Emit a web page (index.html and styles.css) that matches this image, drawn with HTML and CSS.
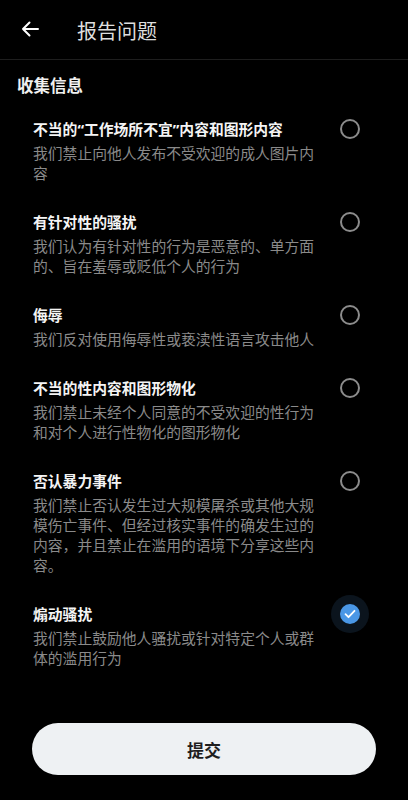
FILE: index.html
```html
<!DOCTYPE html>
<html lang="zh-CN">
<head>
  <meta charset="UTF-8" />
  <meta name="viewport" content="width=device-width, initial-scale=1.0" />
  <title>报告问题</title>
  <link rel="stylesheet" href="styles.css">
</head>
<body>
  <div class="page">
    <div class="topbar">
      <button class="back" aria-label="返回">
        <svg width="18" height="16" viewBox="0 0 18 16">
          <path d="M17 8H2M8.5 1.5L2 8l6.5 6.5" fill="none" stroke="#fff" stroke-width="2" stroke-linecap="round" stroke-linejoin="round"/>
        </svg>
      </button>
      <div class="title">报告问题</div>
    </div>

    <h2 class="section">收集信息</h2>

    <ul class="options">
      <li class="option">
        <div class="text">
          <div class="name">不当的“工作场所不宜”内容和图形内容</div>
          <div class="desc">我们禁止向他人发布不受欢迎的成人图片内容</div>
        </div>
        <span class="radio"></span>
      </li>
      <li class="option">
        <div class="text">
          <div class="name">有针对性的骚扰</div>
          <div class="desc">我们认为有针对性的行为是恶意的、单方面的、旨在羞辱或贬低个人的行为</div>
        </div>
        <span class="radio"></span>
      </li>
      <li class="option">
        <div class="text">
          <div class="name">侮辱</div>
          <div class="desc">我们反对使用侮辱性或亵渎性语言攻击他人</div>
        </div>
        <span class="radio"></span>
      </li>
      <li class="option">
        <div class="text">
          <div class="name">不当的性内容和图形物化</div>
          <div class="desc">我们禁止未经个人同意的不受欢迎的性行为和对个人进行性物化的图形物化</div>
        </div>
        <span class="radio"></span>
      </li>
      <li class="option">
        <div class="text">
          <div class="name">否认暴力事件</div>
          <div class="desc">我们禁止否认发生过大规模屠杀或其他大规模伤亡事件、但经过核实事件的确发生过的内容，并且禁止在滥用的语境下分享这些内容。</div>
        </div>
        <span class="radio"></span>
      </li>
      <li class="option">
        <div class="text">
          <div class="name">煽动骚扰</div>
          <div class="desc">我们禁止鼓励他人骚扰或针对特定个人或群体的滥用行为</div>
        </div>
        <span class="radio checked">
          <svg width="12" height="10" viewBox="0 0 12 10">
            <path d="M1.5 5.2L4.5 8.2 10.5 1.8" fill="none" stroke="#fff" stroke-width="1.8" stroke-linecap="round" stroke-linejoin="round"/>
          </svg>
        </span>
      </li>
    </ul>

    <div class="footer">
      <button class="submit">提交</button>
    </div>
  </div>
</body>
</html>
```

FILE: styles.css
```css
* {
  margin: 0;
  padding: 0;
  box-sizing: border-box;
}
body {
  font-family: "Noto Sans CJK SC", "Noto Sans", sans-serif;
  background: #000;
  color: #fff;
}
.page {
  min-height: 100vh;
  display: flex;
  flex-direction: column;
}
.topbar {
  height: 60px;
  display: flex;
  align-items: center;
  border-bottom: 1px solid #1e1e1e;
}
.back {
  background: none;
  border: none;
  width: 18px;
  margin-left: 21px;
  display: flex;
  align-items: center;
  margin-top: -1px;
}
.title {
  margin-left: 38px;
  font-size: 20px;
  line-height: 24px;
  color: #dedede;
  margin-top: 3px;
}
.section {
  font-size: 16.5px;
  line-height: 24px;
  font-weight: bold;
  color: #f0f0f0;
  padding: 13px 0 0 17px;
  margin-bottom: 7px;
}
.options {
  list-style: none;
  flex: 1;
}
.option {
  display: flex;
  align-items: flex-start;
  padding: 14px 0 14px 33px;
}
.text {
  width: 290px;
}
/* latin font first so the curly quotes stay narrow */
.name {
  font-family: "Noto Sans", "Noto Sans CJK SC", sans-serif;
  font-size: 14.8px;
  line-height: 22px;
  font-weight: bold;
  color: #f4f4f4;
}
.desc {
  margin-top: 3px;
  font-size: 14.8px;
  line-height: 20px;
  color: #8a8a8a;
}
.radio {
  margin-left: 17px;
  margin-top: 1px;
  width: 20px;
  height: 20px;
  border: 2px solid #8c8c8c;
  border-radius: 50%;
  display: flex;
  align-items: center;
  justify-content: center;
}
.radio.checked {
  border: none;
  background: #4a97e6;
  box-shadow: 0 0 0 9px #0b141d;
}
.footer {
  padding: 0 32px 25px;
}
.submit {
  width: 100%;
  height: 52px;
  border: none;
  border-radius: 26px;
  background: #eef1f3;
  color: #1e1e1e;
  font-family: inherit;
  font-size: 17px;
  font-weight: bold;
}
```
